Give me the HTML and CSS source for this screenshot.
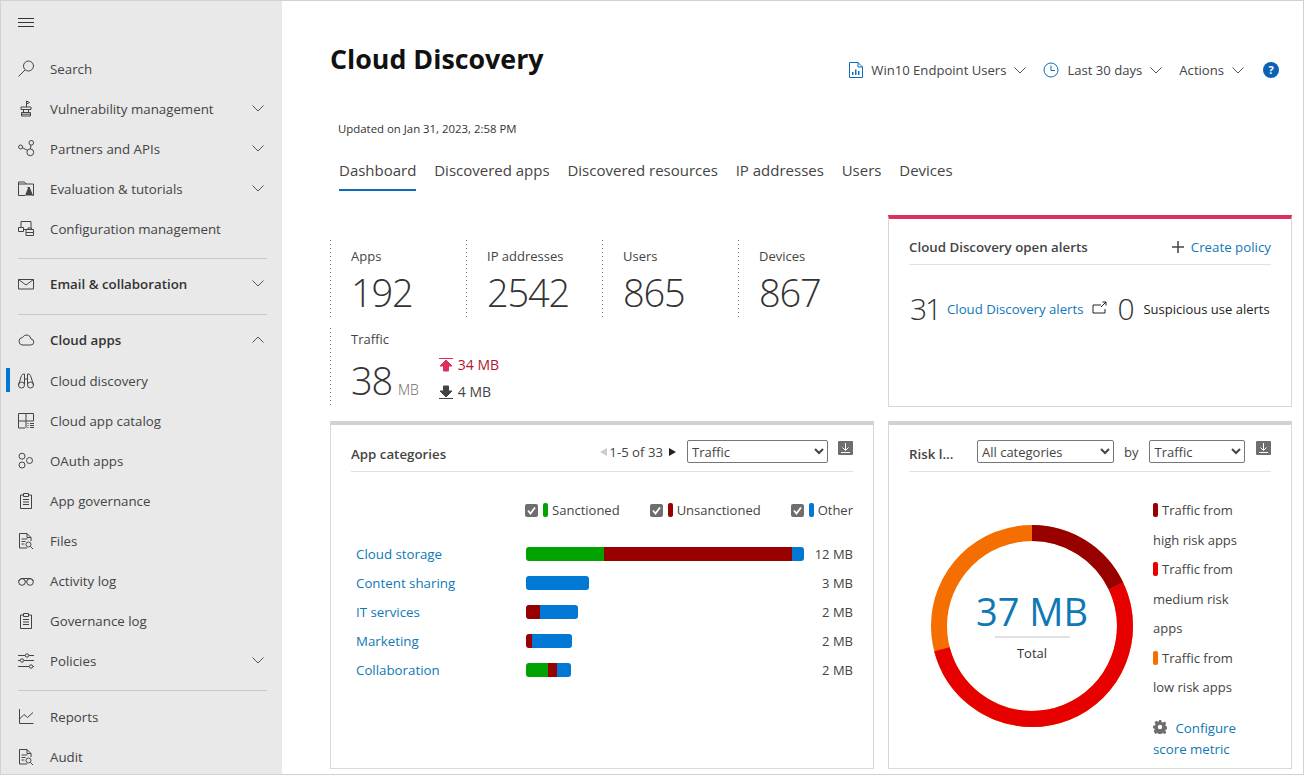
FILE: index.html
```html
<!DOCTYPE html>
<html>
  <head>
    <meta charset="UTF-8">
    <meta name="viewport" content="width=device-width, initial-scale=1.0">
    <title>Cloud Discovery</title>
    <link rel="stylesheet" href="styles.css">
  </head>
  <body>
    <div class="window">
      <!-- Left navigation -->
      <nav class="sidebar">
        <div class="burger">
          <svg class="icon" viewBox="0 0 16 16"><path d="M0 3.5h16M0 7.5h16M0 11.5h16"/></svg>
        </div>
        <a class="nav-item">
          <svg class="icon" viewBox="0 0 16 16"><circle cx="10.5" cy="5" r="5"/><path d="M7 9L.5 15.5"/></svg>
          <span>Search</span>
        </a>
        <a class="nav-item">
          <svg class="icon" viewBox="0 0 16 16"><path d="M8.5 6V0l3 1.5-3 1.5M3 6h10v2.5H3zM5.5 8.5v3M10.5 8.5v3M3.5 11.5h9V15h-9zM3.5 13.2h9"/></svg>
          <span>Vulnerability management</span>
          <svg class="chev" viewBox="0 0 12 7"><path d="M.5.5L6 6 11.5.5"/></svg>
        </a>
        <a class="nav-item">
          <svg class="icon" viewBox="0 0 16 16"><circle cx="2.6" cy="6" r="2"/><circle cx="13.3" cy="1.8" r="2.3"/><circle cx="12.3" cy="11.3" r="3.4"/><path d="M4.5 6.7L9.3 9.3M12.9 4l-.4 3.9"/></svg>
          <span>Partners and APIs</span>
          <svg class="chev" viewBox="0 0 12 7"><path d="M.5.5L6 6 11.5.5"/></svg>
        </a>
        <a class="nav-item">
          <svg class="icon" viewBox="0 0 16 16"><path d="M7 14.5H.5V1h6L8 3h7.5v11.5h-1M.5 3H8"/><path class="solid" d="M9 6h3v1l3 7.5H7l3-7.5z"/></svg>
          <span>Evaluation &amp; tutorials</span>
          <svg class="chev" viewBox="0 0 12 7"><path d="M.5.5L6 6 11.5.5"/></svg>
        </a>
        <a class="nav-item">
          <svg class="icon" viewBox="0 0 16 16"><path d="M3 6V.5h10V7M.5 6.5h5v4h-5zM5.5 8.5H8M8 8.5h7.5v6H8zM8 11.5h7.5M10 8.5V7h3.5v1.5"/></svg>
          <span>Configuration management</span>
        </a>
        <hr class="nav-rule">
        <a class="nav-item head email">
          <svg class="icon" viewBox="0 0 16 16"><path d="M.5 3.5h15V13H.5zM.5 3.5L8 9l7.5-5.5"/></svg>
          <span>Email &amp; collaboration</span>
          <svg class="chev" viewBox="0 0 12 7"><path d="M.5.5L6 6 11.5.5"/></svg>
        </a>
        <hr class="nav-rule">
        <a class="nav-item head cloud">
          <svg class="icon" viewBox="0 0 16 16"><path d="M4 13h8.5a3 3 0 0 0 .5-6 4.5 4.5 0 0 0-8.5-1.500A3.800 3.800 0 0 0 4 13z"/></svg>
          <span>Cloud apps</span>
          <svg class="chev" viewBox="0 0 12 7"><path d="M.5 6.5L6 1l5.5 5.5"/></svg>
        </a>
        <a class="nav-item selected">
          <svg class="icon" viewBox="0 0 16 16"><circle cx="3.5" cy="12" r="3"/><circle cx="12.5" cy="12" r="3"/><path d="M.5 12l3-9.5Q4.5.5 6.5 1V11M15.5 12l-3-9.5Q11.5.5 9.5 1V11M6.5 6h3"/></svg>
          <span>Cloud discovery</span>
        </a>
        <a class="nav-item">
          <svg class="icon" viewBox="0 0 16 16"><path d="M7 15H.5V.5h15V8M.5 8h15M8 .5V15M9.5 10.5h1M12 10.5h4M9.5 12.5h1M12 12.5h4M9.5 14.5h1M12 14.5h4"/></svg>
          <span>Cloud app catalog</span>
        </a>
        <a class="nav-item">
          <svg class="icon" viewBox="0 0 16 16"><circle cx="4" cy="3.2" r="3"/><circle cx="4" cy="12" r="3"/><circle cx="11.5" cy="7.5" r="3"/></svg>
          <span>OAuth apps</span>
        </a>
        <a class="nav-item">
          <svg class="icon" viewBox="0 0 16 16"><path d="M5 2H2.5v13.5h11V2H11M5.5 3.5h5V.5h-5zM5 6.5h6M5 9h6M5 11.5h6"/></svg>
          <span>App governance</span>
        </a>
        <a class="nav-item">
          <svg class="icon" viewBox="0 0 16 16"><path d="M9 15H1.5V.5H9l4 4V8M9 .5v4h4M3.5 6h6M3.5 8.5h4M3.5 11h3M12.5 13.5L15 16"/><circle cx="10.5" cy="11.5" r="2.5"/></svg>
          <span>Files</span>
        </a>
        <a class="nav-item">
          <svg class="icon" viewBox="0 0 16 16"><circle cx="4" cy="9" r="3.3"/><circle cx="12" cy="9" r="3.3"/><path d="M7.3 8h1.4M.5 8L3 5.5h10L15.5 8"/></svg>
          <span>Activity log</span>
        </a>
        <a class="nav-item">
          <svg class="icon" viewBox="0 0 16 16"><path d="M5 2H2.5v13.5h11V2H11M5.5 3.5h5V.5h-5zM5 6.5h6M5 9h6M5 11.5h6"/></svg>
          <span>Governance log</span>
        </a>
        <a class="nav-item">
          <svg class="icon" viewBox="0 0 16 16"><path d="M0 2.5h7M11 2.5h5M0 7.5h2M6 7.5h10M0 13.5h11M15 13.5h1"/><circle cx="9" cy="2.5" r="1.7"/><circle cx="4" cy="7.5" r="1.7"/><circle cx="13" cy="13.5" r="1.7"/></svg>
          <span>Policies</span>
          <svg class="chev" viewBox="0 0 12 7"><path d="M.5.5L6 6 11.5.5"/></svg>
        </a>
        <hr class="nav-rule last-rule">
        <a class="nav-item">
          <svg class="icon" viewBox="0 0 16 16"><path d="M1.5 0v14.5h14M1.5 10L6 5.5l3.5 3L15 3.5"/></svg>
          <span>Reports</span>
        </a>
        <a class="nav-item">
          <svg class="icon" viewBox="0 0 16 16"><path d="M9 15H1.5V.5H9l4 4V8M9 .5v4h4M3.5 6h6M3.5 8.5h4M3.5 11h3M12.5 13.5L15 16"/><circle cx="10.5" cy="11.5" r="2.5"/></svg>
          <span>Audit</span>
        </a>
      </nav>

      <main class="content">
        <header class="page-head">
          <h1>Cloud Discovery</h1>
          <div class="toolbar">
            <span class="tool">
              <svg class="tool-icon" viewBox="0 0 14 16"><path d="M.5.5H9L13.5 5v10.5H.5zM9 .5V5h4.5"/><path class="blue-fill" d="M3 13v-3h1.5v3zM6 13V7.5h1.5V13zM9 13V9h1.5v4z"/></svg>
              Win10 Endpoint Users
              <svg class="chev" viewBox="0 0 12 7"><path d="M.5.5L6 6 11.5.5"/></svg>
            </span>
            <span class="tool">
              <svg class="tool-icon clock" viewBox="0 0 16 16"><circle cx="8" cy="8" r="7"/><path d="M8 3.5v5h4"/></svg>
              Last 30 days
              <svg class="chev" viewBox="0 0 12 7"><path d="M.5.5L6 6 11.5.5"/></svg>
            </span>
            <span class="tool">
              Actions
              <svg class="chev" viewBox="0 0 12 7"><path d="M.5.5L6 6 11.5.5"/></svg>
            </span>
            <span class="help">?</span>
          </div>
        </header>
        <p class="updated">Updated on Jan 31, 2023, 2:58 PM</p>
        <div class="tabs">
          <a class="tab active">Dashboard</a>
          <a class="tab">Discovered apps</a>
          <a class="tab">Discovered resources</a>
          <a class="tab">IP addresses</a>
          <a class="tab">Users</a>
          <a class="tab">Devices</a>
        </div>

        <div class="dash">
          <section class="stats">
            <div class="stat"><div class="stat-label">Apps</div><div class="stat-num">192</div></div>
            <div class="stat"><div class="stat-label">IP addresses</div><div class="stat-num">2542</div></div>
            <div class="stat"><div class="stat-label">Users</div><div class="stat-num">865</div></div>
            <div class="stat"><div class="stat-label">Devices</div><div class="stat-num">867</div></div>
            <div class="stat traffic">
              <div class="stat-label">Traffic</div>
              <div class="traffic-row">
                <div class="stat-num">38<small>MB</small></div>
                <div class="updown">
                  <div class="up">
                    <svg viewBox="0 0 14 14"><path d="M0 .5h14M7 2l6 6H9.5v5h-5V8H1z"/></svg>34 MB
                  </div>
                  <div class="down">
                    <svg viewBox="0 0 14 14"><path d="M0 13.5h14M7 12l6-6H9.5V1h-5v5H1z"/></svg>4 MB
                  </div>
                </div>
              </div>
            </div>
          </section>

          <section class="card alerts">
            <div class="card-head">
              <h2>Cloud Discovery open alerts</h2>
              <a class="create">
                <svg viewBox="0 0 12 12"><path d="M6 0v12M0 6h12"/></svg>Create policy
              </a>
            </div>
            <div class="alert-row">
              <span class="alert-num">31</span>
              <a class="link">Cloud Discovery alerts</a>
              <svg class="ext" viewBox="0 0 16 14"><path d="M9 4H1v8h12V8M9 6l5-5M10.5 1H14v3.5"/></svg>
              <span class="alert-num zero">0</span>
              <span class="alert-text">Suspicious use alerts</span>
            </div>
          </section>

          <section class="card">
            <div class="card-head">
              <h2>App categories</h2>
              <div class="head-tools">
                <span class="pager">
                  <i class="tri prev"></i>1-5 of 33<i class="tri next"></i>
                </span>
                <select class="sel sel-traffic"><option>Traffic</option></select>
                <svg class="save" viewBox="0 0 15 14"><rect width="15" height="14" rx="1"/><path d="M7.5 2v7M4.5 6.5l3 3 3-3M3 11.5h9"/></svg>
              </div>
            </div>
            <div class="legend">
              <span class="key"><i class="check"><svg viewBox="0 0 13 13"><path d="M3 6.5l2.5 3L10 3.5"/></svg></i><i class="swatch green"></i>Sanctioned</span>
              <span class="key"><i class="check"><svg viewBox="0 0 13 13"><path d="M3 6.5l2.5 3L10 3.5"/></svg></i><i class="swatch dark"></i>Unsanctioned</span>
              <span class="key"><i class="check"><svg viewBox="0 0 13 13"><path d="M3 6.5l2.5 3L10 3.5"/></svg></i><i class="swatch blue"></i>Other</span>
            </div>
            <div class="rows">
              <div class="row">
                <a class="link row-name">Cloud storage</a>
                <div class="bar"><i class="green" style="width:78px"></i><i class="dark" style="width:188px"></i><i class="blue" style="width:12px"></i></div>
                <span class="row-val">12 MB</span>
              </div>
              <div class="row">
                <a class="link row-name">Content sharing</a>
                <div class="bar"><i class="blue" style="width:63px"></i></div>
                <span class="row-val">3 MB</span>
              </div>
              <div class="row">
                <a class="link row-name">IT services</a>
                <div class="bar"><i class="dark" style="width:14px"></i><i class="blue" style="width:38px"></i></div>
                <span class="row-val">2 MB</span>
              </div>
              <div class="row">
                <a class="link row-name">Marketing</a>
                <div class="bar"><i class="dark" style="width:6px"></i><i class="blue" style="width:40px"></i></div>
                <span class="row-val">2 MB</span>
              </div>
              <div class="row">
                <a class="link row-name">Collaboration</a>
                <div class="bar"><i class="green" style="width:22px"></i><i class="dark" style="width:9px"></i><i class="blue" style="width:14px"></i></div>
                <span class="row-val">2 MB</span>
              </div>
            </div>
          </section>

          <section class="card">
            <div class="card-head">
              <h2 class="risk-title">Risk l...</h2>
              <select class="sel sel-cat"><option>All categories</option></select>
              <span class="by">by</span>
              <select class="sel sel-by"><option>Traffic</option></select>
              <svg class="save push" viewBox="0 0 15 14"><rect width="15" height="14" rx="1"/><path d="M7.5 2v7M4.5 6.5l3 3 3-3M3 11.5h9"/></svg>
            </div>
            <div class="risk-body">
              <div class="donut">
                <svg viewBox="0 0 202 202">
                  <circle class="ring" cx="101" cy="101" r="93" stroke="#f46f00"/>
                  <circle class="ring" cx="101" cy="101" r="93" stroke="#e60000" pathLength="360" stroke-dasharray="191 360" stroke-dashoffset="-64.5" transform="rotate(-90 101 101)"/>
                  <circle class="ring" cx="101" cy="101" r="93" stroke="#980000" pathLength="360" stroke-dasharray="64.5 360" transform="rotate(-90 101 101)"/>
                </svg>
                <div class="donut-label">
                  <div class="donut-num">37 MB</div>
                  <div class="donut-total">Total</div>
                </div>
              </div>
              <div class="risk-side">
                <p class="risk-key"><i class="swatch dark"></i>Traffic from high risk apps</p>
                <p class="risk-key"><i class="swatch red"></i>Traffic from medium risk apps</p>
                <p class="risk-key"><i class="swatch orange"></i>Traffic from low risk apps</p>
                <p class="config">
                  <svg viewBox="0 0 14 14"><path d="M5.8 0h2.4l.4 1.9 1.3.6 1.7-1 1.7 1.7-1 1.7.6 1.3 1.9.4v2.4l-1.900.4-.6 1.300 1 1.700-1.700 1.700-1.700-1-1.300.6-.4 1.900H5.800l-.4-1.900-1.300-.6-1.700 1L.7 11.200l1-1.700-.6-1.300L0 8.200V5.800l1.900-.4.6-1.300-1-1.700L3.200.7l1.700 1 1.300-.6zM7 4.800a2.200 2.200 0 1 0 0 4.400 2.200 2.200 0 0 0 0-4.400z"/></svg>
                  <a class="link">Configure score metric</a>
                </p>
              </div>
            </div>
          </section>
        </div>
      </main>
    </div>
  </body>
</html>
```
FILE: styles.css
```css
* {
  box-sizing: border-box;
}

body {
  margin: 0;
  font-family: "Open Sans", "Noto Sans", sans-serif;
  font-size: 13px;
  color: #444;
  background-color: white;
}

.window {
  display: flex;
  width: 1304px;
  height: 775px;
  border: 1px solid #d2d2d2;
  overflow: hidden;
}

/* Sidebar */
.sidebar {
  flex: none;
  width: 281px;
  background-color: #e9e9e9;
  padding-top: 2px;
}

.burger {
  height: 40px;
  margin-bottom: 6px;
  padding-left: 17px;
  display: flex;
  align-items: center;
}

.burger .icon {
  stroke: #333;
}

.nav-item {
  position: relative;
  display: flex;
  align-items: center;
  height: 40px;
  padding-left: 17px;
  font-size: 13.3px;
  color: #444;
}

.nav-item span {
  margin-left: 16px;
}

.nav-item .chev {
  position: absolute;
  left: 251px;
  top: 16px;
}

.head {
  font-weight: 600;
  height: 32px;
  color: #333;
}

.head .chev {
  top: 12px;
}

.email {
  margin-bottom: 14px;
}

.cloud {
  margin-bottom: 5px;
}

.selected::before {
  content: "";
  position: absolute;
  left: 5px;
  top: 7px;
  width: 4px;
  height: 24px;
  background-color: #0078d4;
}

.nav-rule {
  margin: 9px 15px 9px 17px;
  border: 0;
  border-top: 1px solid #c8c8c8;
}

.email + .nav-rule {
  margin-top: 0;
}

.last-rule {
  margin-bottom: 6px;
}

.icon {
  flex: none;
  width: 16px;
  height: 16px;
  overflow: visible;
  fill: none;
  stroke: #444;
  stroke-width: 1;
}

.icon .solid {
  fill: #444;
  stroke: none;
}

.chev {
  flex: none;
  width: 12px;
  height: 7px;
  fill: none;
  stroke: #555;
  stroke-width: 1;
}

/* Page heading */
.content {
  flex: 1;
  padding-left: 48px;
  min-width: 0;
}

.page-head {
  display: flex;
  justify-content: space-between;
  padding-right: 24px;
}

h1 {
  margin: 38px 0 0;
  font-size: 26.8px;
  line-height: 40px;
  font-weight: 700;
  color: #111;
}

.toolbar {
  display: flex;
  align-items: center;
  height: 20px;
  margin-top: 59px;
  font-size: 13.1px;
  color: #444;
}

.tool {
  display: flex;
  align-items: center;
  margin-right: 17px;
}

.tool .chev {
  margin-left: 8px;
}

.tool-icon {
  width: 14px;
  height: 16px;
  margin-right: 8px;
  fill: none;
  stroke: #0f6cbd;
  stroke-width: 1;
}

.clock {
  width: 16px;
}

.blue-fill {
  fill: #0f6cbd;
  stroke: none;
}

.help {
  width: 16px;
  height: 16px;
  border-radius: 50%;
  background-color: #0b62b5;
  color: white;
  font-size: 11px;
  font-weight: 700;
  line-height: 16px;
  text-align: center;
  margin-left: 2px;
}

.updated {
  margin: 39px 0 0 8px;
  font-size: 11.4px;
  line-height: 20px;
  color: #333;
}

.tabs {
  display: flex;
  gap: 17.8px;
  margin: 20px 0 0 9px;
  height: 32px;
}

.tab {
  font-size: 15px;
  line-height: 22px;
  padding-bottom: 8px;
  color: #444;
}

.active {
  border-bottom: 2px solid #0f6cbd;
}

/* Dashboard grid */
.dash {
  display: grid;
  grid-template-columns: 544px 404px;
  grid-template-rows: 192px 348px;
  gap: 14px;
  margin-top: 24px;
}

.stats {
  display: flex;
  flex-wrap: wrap;
  align-content: flex-start;
  padding-top: 25px;
  row-gap: 10px;
}

.stat {
  width: 136px;
  height: 78px;
  padding-left: 21px;
  background-image: linear-gradient(#777 25%, transparent 25%);
  background-size: 1px 4px;
  background-repeat: repeat-y;
}

.traffic {
  width: 300px;
}

.stat-label {
  margin-top: 6px;
  line-height: 20px;
}

.traffic .stat-label {
  margin-top: 1px;
}

.stat-num {
  margin-top: 1px;
  font-size: 38px;
  font-weight: 300;
  line-height: 50px;
  letter-spacing: -1.2px;
  color: #333;
}

.traffic .stat-num {
  margin-top: 6px;
}

.stat-num small {
  font-size: 14px;
  letter-spacing: 0;
  color: #666;
  margin-left: 6px;
}

.traffic-row {
  display: flex;
  gap: 20px;
}

.updown {
  padding-top: 2px;
  font-size: 14px;
  line-height: 27px;
}

.up,
.down {
  display: flex;
  align-items: center;
  gap: 5px;
}

.up {
  color: #b3172d;
}

.up svg,
.down svg {
  width: 14px;
  height: 14px;
}

.up svg {
  fill: #df2f5c;
  stroke: #df2f5c;
}

.down svg {
  fill: #444;
  stroke: #444;
}

.card {
  border: 1px solid #d8d8d8;
  border-top: 4px solid #d2d2d2;
  padding: 0 20px;
  background-color: white;
}

.alerts {
  border-top-color: #df2f5c;
}

.card-head {
  display: flex;
  align-items: center;
  height: 47px;
  border-bottom: 1px solid #e1e1e1;
}

.card h2 {
  margin: 11px 0 0;
  font-size: 13.3px;
  font-weight: 600;
  color: #444;
  white-space: nowrap;
}

.alerts .card-head {
  justify-content: space-between;
  height: 46px;
  padding-top: 11px;
}

.alerts h2 {
  margin-top: 0;
}

.create {
  display: flex;
  align-items: center;
  gap: 7px;
  font-size: 13.3px;
  color: #0f78b5;
}

.create svg {
  width: 12px;
  height: 12px;
  stroke: #444;
  stroke-width: 1.5;
}

.link {
  font-size: 13.3px;
  color: #0f78b5;
}

.alert-row {
  display: flex;
  align-items: center;
  margin-top: 22px;
  white-space: nowrap;
}

.alert-row .link {
  font-size: 13.2px;
}

.alert-num {
  flex: none;
  width: 37px;
  margin-left: 1px;
  font-size: 30px;
  font-weight: 300;
  letter-spacing: -2px;
  color: #333;
  line-height: 44px;
}

.zero {
  width: 26px;
  margin-left: 0;
}

.ext {
  flex: none;
  width: 16px;
  height: 14px;
  margin: 0 9px 2px 9px;
  fill: none;
  stroke: #222;
}

.alert-text {
  color: #222;
}

.head-tools {
  flex: 1;
  display: flex;
  align-items: center;
  justify-content: flex-end;
}

.pager {
  display: flex;
  align-items: center;
  margin-right: 11px;
  margin-top: 7px;
  font-size: 13.2px;
}

.tri {
  width: 0;
  height: 0;
  border-top: 4px solid transparent;
  border-bottom: 4px solid transparent;
}

.prev {
  border-right: 7px solid #ccc;
  margin-right: 2px;
}

.next {
  border-left: 7px solid #222;
  margin-left: 6px;
}

.sel {
  height: 23px;
  font-family: inherit;
  font-size: 13px;
  color: #444;
  background-color: white;
  border: 1px solid #767676;
  border-radius: 2px;
  margin-top: 7px;
  padding: 0;
}

.sel-traffic {
  width: 141px;
}

.sel-cat {
  width: 137px;
  margin-left: 22px;
}

.sel-by {
  width: 96px;
}

.by {
  margin: 7px 11px 0 10px;
}

.risk-title {
  width: 46px;
}

.save {
  flex: none;
  width: 15px;
  height: 14px;
  margin: -1px 0 0 10px;
  fill: #6e6e6e;
  stroke: none;
}

.push {
  margin-left: auto;
}

.save path {
  fill: none;
  stroke: white;
}

/* App categories */
.legend {
  display: flex;
  justify-content: flex-end;
  gap: 30px;
  margin-top: 28px;
  line-height: 20px;
}

.key {
  display: flex;
  align-items: center;
}

.check {
  width: 13px;
  height: 13px;
  margin-right: 5px;
  background-color: #6e6e6e;
  border-radius: 2px;
  display: flex;
}

.check svg {
  fill: none;
  stroke: white;
  stroke-width: 1.8;
}

.swatch {
  display: inline-block;
  width: 5px;
  height: 14px;
  margin-right: 4px;
  border-radius: 2px;
  vertical-align: -2px;
}

.green {
  background-color: #00a300;
}

.dark {
  background-color: #980000;
}

.blue {
  background-color: #0078d4;
}

.red {
  background-color: #e60000;
}

.orange {
  background-color: #f46f00;
}

.rows {
  margin-top: 19px;
}

.row {
  display: flex;
  align-items: center;
  height: 29px;
}

.row-name {
  width: 175px;
  padding-left: 5px;
}

.bar {
  display: flex;
  height: 14px;
  border-radius: 3px;
  overflow: hidden;
}

.bar i {
  display: block;
  height: 14px;
}

.row-val {
  margin-left: auto;
}

/* Risk donut */
.risk-body {
  display: flex;
}

.donut {
  position: relative;
  width: 202px;
  height: 202px;
  margin: 53px 20px 0 22px;
  flex: none;
}

.ring {
  fill: none;
  stroke-width: 16;
}

.donut-label {
  position: absolute;
  left: 0;
  right: 0;
  top: 63px;
  text-align: center;
}

.donut-num {
  font-size: 38px;
  line-height: 46px;
  color: #0f78b5;
}

.donut-num::after {
  content: "";
  display: block;
  width: 75px;
  margin: 2px auto 0;
  border-top: 2px solid #e1e1e1;
}

.donut-total {
  margin-top: 6px;
  color: #333;
}

.risk-side {
  padding-top: 24px;
  width: 100px;
}

.risk-key {
  margin: 0;
  line-height: 29.5px;
}

.config {
  margin: 15px 0 0;
  line-height: 21px;
}

.config svg {
  width: 14px;
  height: 14px;
  margin-right: 5px;
  fill: #6e6e6e;
  vertical-align: -1px;
}
```
